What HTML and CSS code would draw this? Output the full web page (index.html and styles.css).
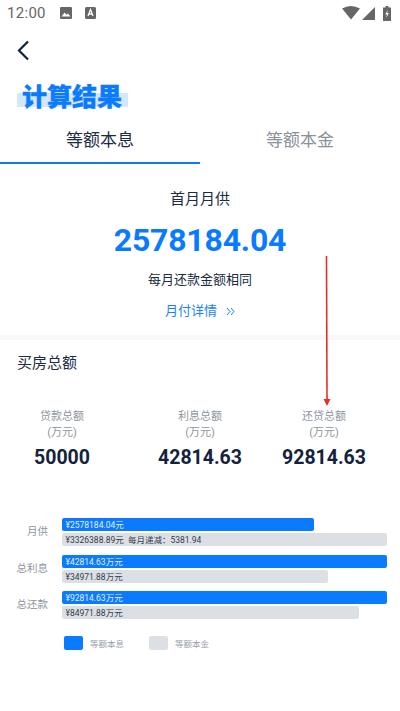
FILE: index.html
```html
<!DOCTYPE html>
<html lang="zh">
<head>
<meta charset="utf-8">
<title>计算结果</title>
<link rel="stylesheet" href="styles.css">
</head>
<body>
<div class="page">
  <div class="status">
    <span class="time">12:00</span>
    <svg class="st-img" viewBox="0 0 12 12"><rect width="12" height="12" rx="1.2" fill="#666"/><path d="M1.500 9.500 4.500 5.500 6.500 7.800 8 6.500 10.500 9.500Z" fill="#fff"/></svg>
    <svg class="st-a" viewBox="0 0 11 12"><rect width="11" height="12" rx="1.500" fill="#666"/><path d="M3 9 5.500 2.500 8 9M4 7h3" fill="none" stroke="#fff" stroke-width="1.300"/></svg>
    <span class="st-space"></span>
    <svg class="st-wifi" viewBox="0 0 18 14"><path d="M0 2.500Q9-2.500 18 2.500L9 13.500Z" fill="#666"/></svg>
    <svg class="st-signal" viewBox="0 0 13 13"><path d="M13 0V13H0Z" fill="#666"/></svg>
    <svg class="st-batt" viewBox="0 0 8 15"><path d="M2.500 0h3v1.500H8V15H0V1.500h2.500Z" fill="#666"/><path d="M4.800 3.500 2.300 8.500h1.700L3.300 12 5.800 7H4.100Z" fill="#fff"/></svg>
  </div>
  <div class="nav">
    <svg class="back" viewBox="0 0 13 21"><path d="M11 1.500 2 10.500 11 19.500" fill="none" stroke="#0f2240" stroke-width="2.200"/></svg>
  </div>
  <div class="title-wrap"><h1 class="title">计算结果</h1></div>
  <div class="tabs">
    <div class="tab active">等额本息</div>
    <div class="tab">等额本金</div>
  </div>
  <section class="summary">
    <div class="sum-label">首月月供</div>
    <div class="sum-value">2578184.04</div>
    <div class="sum-note">每月还款金额相同</div>
    <div class="sum-link">月付详情<svg class="chev" viewBox="0 0 9 9"><path d="M1 1 4 4.500 1 8M5 1 8 4.500 5 8" fill="none" stroke="#1a82ff" stroke-width="1"/></svg></div>
  </section>
  <section class="total">
    <h2 class="total-title">买房总额</h2>
    <div class="cols">
      <div class="col"><div class="col-label">贷款总额<br>(万元)</div><div class="col-value">50000</div></div>
      <div class="col"><div class="col-label">利息总额<br>(万元)</div><div class="col-value">42814.63</div></div>
      <div class="col"><div class="col-label">还贷总额<br>(万元)</div><div class="col-value">92814.63</div></div>
    </div>
  </section>
  <section class="chart">
    <div class="group">
      <div class="g-label">月供</div>
      <div class="bars">
        <div class="bar blue" style="width:77.500%">¥2578184.04元</div>
        <div class="bar grey" style="width:100%">¥3326388.89元&nbsp;&nbsp;每月递减：5381.94</div>
      </div>
    </div>
    <div class="group">
      <div class="g-label">总利息</div>
      <div class="bars">
        <div class="bar blue" style="width:100%">¥42814.63万元</div>
        <div class="bar grey" style="width:81.700%">¥34971.88万元</div>
      </div>
    </div>
    <div class="group">
      <div class="g-label">总还款</div>
      <div class="bars">
        <div class="bar blue" style="width:100%">¥92814.63万元</div>
        <div class="bar grey" style="width:91.500%">¥84971.88万元</div>
      </div>
    </div>
    <div class="legend">
      <div class="lg-item"><span class="swatch blue"></span>等额本息</div>
      <div class="lg-item"><span class="swatch grey"></span>等额本金</div>
    </div>
  </section>
  <svg class="arrow" viewBox="0 0 10 152"><path d="M4.500 0 5 144" stroke="#e2302f" stroke-width="1.600" fill="none"/><path d="M1.500 143H8.500L5 150Z" fill="#e2302f"/></svg>
</div>
</body>
</html>
```
FILE: styles.css
```css
* { box-sizing: border-box; }
html, body { margin: 0; padding: 0; }
body {
  background: #fff;
  font-family: "Roboto", "Noto Sans CJK SC", sans-serif;
  color: #1c2b44;
}
.page { position: relative; width: 400px; height: 711px; overflow: hidden; background: #fff; }
.status { height: 26px; display: flex; align-items: center; padding: 0 9px 0 7px; color: #666; }
.time { font-size: 15px; letter-spacing: .3px; width: 53px; }
.st-img { width: 12px; height: 12px; margin-right: 13px; }
.st-a { width: 11px; height: 12px; }
.st-space { flex: 1; }
.st-wifi { width: 18px; height: 14px; margin-right: 2px; }
.st-signal { width: 13px; height: 13px; margin-right: 8px; }
.st-batt { width: 8px; height: 15px; }
.nav { height: 50px; padding: 14px 0 0 17px; }
.back { display: block; width: 13px; height: 21px; }
.title-wrap { padding-left: 17px; height: 44px; padding-top: 6px; }
.title {
  margin: 0;
  width: 111px;
  height: 26px;
  padding-left: 5px;
  font: 900 25px/26px "Noto Sans CJK SC", sans-serif;
  color: #0a7bff;
  -webkit-text-stroke: .3px #0a7bff;
  background: linear-gradient(to bottom, transparent 11px, #d3e8fd 11px, #d3e8fd 25px, transparent 25px);
  white-space: nowrap;
}
.tabs { display: flex; height: 44px; }
.tab { flex: 1; text-align: center; font-size: 17px; line-height: 40px; color: #8b9199; border-bottom: 2px solid transparent; }
.tab.active { color: #1c2b44; border-bottom-color: #0a7bff; }
.summary { height: 176px; border-bottom: 5px solid #f8f8f8; text-align: center; padding-top: 24px; }
.sum-label { font-size: 15px; line-height: 22px; color: #1c2b44; }
.sum-value { font-size: 32px; font-weight: 700; line-height: 42px; color: #0a7bff; margin-top: 9px; letter-spacing: -.2px; }
.sum-note { font-size: 13px; line-height: 20px; margin-top: 9px; }
.sum-link { display: flex; justify-content: center; align-items: center; font-size: 13px; line-height: 20px; color: #1a82ff; margin-top: 11px; }
.chev { width: 9px; height: 9px; margin-left: 9px; }
.total-title { margin: 0; padding: 12px 0 0 17px; font-size: 15px; font-weight: 400; line-height: 22px; }
.cols { display: grid; grid-template-columns: 124px 152px 96px; padding-top: 35px; }
.col { text-align: center; }
.col-label { font-size: 11px; line-height: 16px; color: #8f959d; }
.col-value { font-size: 19.500px; font-weight: 700; line-height: 24px; color: #14233d; margin-top: 5px; }
.chart { padding: 48px 13px 0 17px; }
.group { display: flex; align-items: center; margin-bottom: 8.500px; }
.g-label { margin-left: -12px; width: 57px; padding-right: 14px; font-size: 10.500px; color: #8f959d; white-space: nowrap; text-align: right; flex: none; line-height: 16px; }
.bars { flex: 1; display: flex; flex-direction: column; gap: 2px; }
.bar { height: 13px; border-radius: 2px; font-size: 8.500px; line-height: 14px; padding-left: 3.500px; white-space: nowrap; }
.bar.blue { background: #0a7bff; color: #e4efff; }
.bar.grey { background: #dce0e4; color: #323d4d; }
.legend { display: flex; padding-left: 47px; margin-top: 17px; }
.lg-item { display: flex; align-items: center; width: 85px; font-size: 8.500px; color: #9aa0a8; }
.swatch { width: 19px; height: 14px; border-radius: 2px; margin-right: 7px; }
.swatch.blue { background: #0a7bff; }
.swatch.grey { background: #dce0e4; }
.arrow { position: absolute; left: 322px; top: 256px; width: 10px; height: 152px; }
```
